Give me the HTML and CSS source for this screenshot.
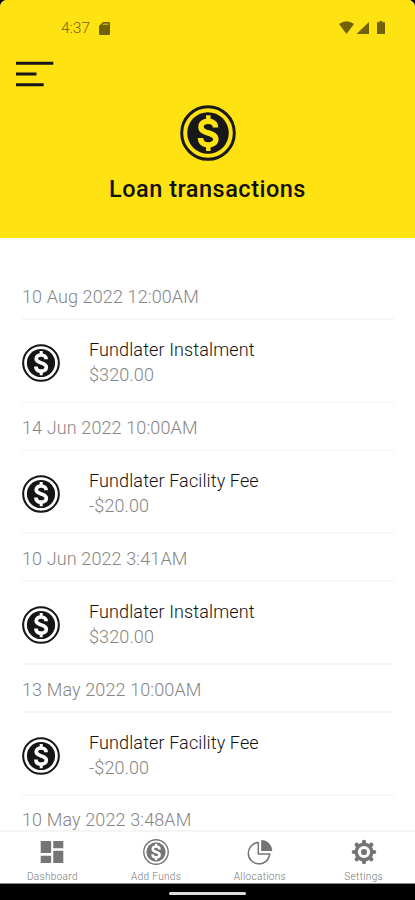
FILE: index.html
```html
<!DOCTYPE html>
<html lang="en">
<head>
    <meta charset="UTF-8">
    <meta name="viewport" content="width=device-width, initial-scale=1.0">
    <title>Loan transactions</title>
    <link rel="stylesheet" href="styles.css">
</head>
<body>
    <!-- Shared coin icon -->
    <svg class="hidden">
        <symbol id="coin" viewBox="0 0 56 56">
            <circle cx="28" cy="28" r="26.3" fill="none" stroke="currentColor" stroke-width="3"/>
            <circle cx="28" cy="28" r="20.8" fill="currentColor"/>
            <path class="coin-mark" d="M35.500 22.500c0-4-3-6.300-7.300-6.300-4.200 0-7.200 2.200-7.200 5.700 0 7.800 14.800 4.400 14.800 12.200 0 3.700-3.100 5.900-7.400 5.900-4.700 0-7.900-2.500-7.900-7"/>
            <path class="coin-mark bar" d="M28.300 10.300v6M28.300 40v6"/>
        </symbol>
    </svg>

    <div class="phone">
        <header class="header">
            <div class="status-bar">
                <span class="time">4:37</span>
                <svg class="sd-icon" width="11" height="13" viewBox="0 0 11 13">
                    <path d="M4 0h6q1 0 1 1v11q0 1-1 1H1q-1 0-1-1V4z" fill="currentColor"/>
                    <path d="M4.300 1.600h5.200v1.300H3z" fill="#c4ae10"/>
                </svg>
                <svg class="signal-icons" width="47" height="14" viewBox="0 0 47 14">
                    <path d="M0 3Q7.500-2.500 15 3L7.500 13z" fill="currentColor"/>
                    <path d="M30 1v12H17.500z" fill="currentColor"/>
                    <path d="M40.500 0h3v1.300H46V13h-8V1.300h2.500z" fill="currentColor"/>
                </svg>
            </div>
            <svg class="menu" width="38" height="26" viewBox="0 0 38 26">
                <path d="M0 2.300h37.300M0 13h20.500M0 23.700h27.700" stroke="#17151c" stroke-width="3"/>
            </svg>
            <svg class="header-coin"><use href="#coin"/></svg>
            <h1 class="title">Loan transactions</h1>
        </header>

        <main class="transactions">
            <div class="date">10 Aug 2022 12:00AM</div>
            <div class="row">
                <svg class="coin"><use href="#coin"/></svg>
                <div>
                    <div class="name">Fundlater Instalment</div>
                    <div class="amount">$320.00</div>
                </div>
            </div>
            <div class="date">14 Jun 2022 10:00AM</div>
            <div class="row">
                <svg class="coin"><use href="#coin"/></svg>
                <div>
                    <div class="name">Fundlater Facility Fee</div>
                    <div class="amount">-$20.00</div>
                </div>
            </div>
            <div class="date">10 Jun 2022 3:41AM</div>
            <div class="row">
                <svg class="coin"><use href="#coin"/></svg>
                <div>
                    <div class="name">Fundlater Instalment</div>
                    <div class="amount">$320.00</div>
                </div>
            </div>
            <div class="date">13 May 2022 10:00AM</div>
            <div class="row">
                <svg class="coin"><use href="#coin"/></svg>
                <div>
                    <div class="name">Fundlater Facility Fee</div>
                    <div class="amount">-$20.00</div>
                </div>
            </div>
            <div class="date last">10 May 2022 3:48AM</div>
        </main>

        <nav class="tabs">
            <a class="tab">
                <svg width="26" height="26" viewBox="0 0 26 26" fill="currentColor">
                    <path d="M1.700 2h10.400v12H1.700zM14.300 2h10v7.300h-10zM1.700 16.700h10.400V24H1.700zM14.300 11.700h10V24h-10z"/>
                </svg>
                <span>Dashboard</span>
            </a>
            <a class="tab">
                <svg class="tab-coin" width="26" height="26"><use href="#coin"/></svg>
                <span>Add Funds</span>
            </a>
            <a class="tab">
                <svg width="26" height="26" viewBox="0 0 26 26">
                    <path d="M11.300 3.500A10.700 10.700 0 1 0 22.700 14.900H11.300z" fill="none" stroke="currentColor" stroke-width="1.500"/>
                    <path d="M14.200 1A11 11 0 0 1 25.200 12h-11z" fill="currentColor"/>
                </svg>
                <span>Allocations</span>
            </a>
            <a class="tab">
                <svg width="26" height="26" viewBox="0 0 26 26">
                    <path d="M13 2.800v20.400M2.800 13h20.400M5.700 5.700l14.600 14.600M20.300 5.700l-14.600 14.600" stroke="currentColor" stroke-width="4.200" stroke-linecap="round"/>
                    <circle cx="13" cy="13" r="9.500" fill="currentColor"/>
                    <circle cx="13" cy="13" r="4.600" fill="none" stroke="#fff" stroke-width="3"/>
                </svg>
                <span>Settings</span>
            </a>
        </nav>
    </div>
    <div class="system-bar"><div class="home-handle"></div></div>
</body>
</html>
```
FILE: styles.css
```css
* {
    box-sizing: border-box;
}
body {
    margin: 0;
    width: 415px;
    height: 900px;
    overflow: hidden;
    background-color: #000;
    font-family: Roboto, sans-serif;
}
.hidden {
    display: none;
}
.phone {
    display: flex;
    flex-direction: column;
    height: 884px;
    background-color: #fff;
    border-radius: 7px 7px 0 0;
    border-bottom: 1px solid #888;
    overflow: hidden;
}

/* Header */
.header {
    display: flex;
    flex-direction: column;
    align-items: center;
    flex: none;
    height: 238px;
    background-color: #ffe212;
    color: #111;
}
.status-bar {
    display: flex;
    align-items: center;
    width: 100%;
    height: 56px;
    padding: 0 29px 0 61px;
    color: #6f6209;
}
.time {
    font-size: 15.5px;
    font-weight: 300;
    width: 38px;
}
.signal-icons {
    margin-left: auto;
}
.menu {
    align-self: flex-start;
    margin: 5px 0 0 16px;
}
.header-coin {
    width: 56px;
    height: 56px;
    margin-top: 18px;
    color: #18171a;
}
.title {
    margin: 13px 0 0;
    font-size: 23.5px;
    line-height: 30px;
    font-weight: 500;
    letter-spacing: 0.5px;
}
.coin-mark {
    fill: none;
    stroke: var(--mark, #ffe212);
    stroke-width: 5.5;
}
.bar {
    stroke-width: 4.5;
}

/* Transaction list */
.transactions {
    flex: 1;
    min-height: 0;
    padding: 34px 21px 0 22px;
    overflow: hidden;
    letter-spacing: 0.12px;
    --mark: #fff;
}
.date {
    height: 46px;
    line-height: 50px;
    font-size: 18px;
    font-weight: 300;
    color: #858585;
}
.last {
    height: auto;
    line-height: 48px;
}
.row {
    display: flex;
    align-items: center;
    height: 85.1px;
    padding-top: 3px;
    border-top: 2px solid #f7f7f7;
    border-bottom: 2px solid #f7f7f7;
    font-size: 18px;
    line-height: 25px;
    font-weight: 300;
}
.coin {
    width: 38px;
    height: 38px;
    margin: 2px 29px 0 0;
    color: #151515;
}
.name {
    color: #111;
}
.amount {
    color: #858585;
}

/* Bottom tabs */
.tabs {
    display: flex;
    flex: none;
    height: 53px;
    border-top: 2px solid #f5f5f5;
    color: #757575;
    --mark: #fff;
}
.tab {
    display: flex;
    flex-direction: column;
    align-items: center;
    width: 25%;
    padding: 7px 0 0 1px;
    font-size: 10px;
    line-height: 12px;
    font-weight: 300;
    letter-spacing: 0.35px;
}
.tab span {
    margin-top: 6px;
}
.system-bar {
    display: flex;
    justify-content: center;
    padding-top: 8px;
}
.home-handle {
    width: 77px;
    height: 3px;
    border-radius: 2px;
    background-color: #ddd;
}
```
